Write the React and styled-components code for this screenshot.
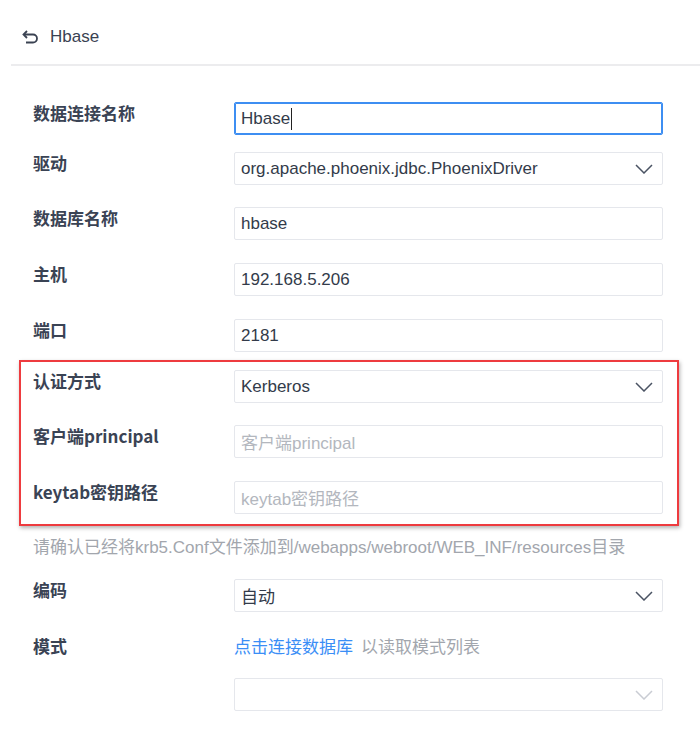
import styled, { createGlobalStyle } from "styled-components";

const Global = createGlobalStyle`
  html, body { margin: 0; padding: 0; background: #fff; }
  body { font-family: "Liberation Sans", "Noto Sans CJK SC", sans-serif; color: #333b4a; }
  * { box-sizing: border-box; }
`;

const Page = styled.div`
  width: 700px;
  height: 734px;
  overflow: hidden;
  background: #fff;
`;

const Header = styled.div`
  margin-left: 11px;
  height: 66px;
  display: flex;
  align-items: center;
  gap: 10px;
  padding-left: 11px;
  padding-top: 10px;
  border-bottom: 2px solid #ececee;
`;

const Title = styled.span`
  font-size: 17px;
  color: #3a4252;
`;

const Form = styled.div`
  padding: 36px 37px 0 33px;
  display: flex;
  flex-direction: column;
`;

const Row = styled.div`
  display: grid;
  grid-template-columns: 201px 1fr;
  align-items: start;
  margin-top: ${(p) => p.$gap ?? 23}px;
`;

const Label = styled.div`
  font-size: 17px;
  font-weight: bold;
  line-height: 22px;
  color: #3a4354;
  font-family: "Noto Sans CJK SC", "Liberation Sans", sans-serif;
`;

const Field = styled.div`
  height: 33px;
  display: flex;
  align-items: center;
  justify-content: space-between;
  padding: 0 9px 0 6px;
  border: 1px solid ${(p) => (p.$focus ? "#3d8ef2" : "#e5e7ec")};
  ${(p) => p.$focus && "box-shadow: 0 0 0 1px #3d8ef2 inset;"}
  border-radius: 2px;
  background: #fff;
  font-size: 17px;
  color: ${(p) => (p.$placeholder ? "#b3b7be" : "#333b4a")};
`;

const Caret = styled.span`
  display: inline-block;
  width: 1px;
  height: 22px;
  background: #222;
  margin-left: 1px;
`;

const AuthBox = styled.div`
  margin: 8px -16px 0 -14px;
  padding: 8px 14px 10px 12px;
  border: 2.5px solid #ee3b3f;
  box-shadow: 1px 2px 4px rgba(0, 0, 0, 0.3);
  & > div:first-child { margin-top: 0; }
`;

const Hint = styled.div`
  margin-top: 11px;
  font-size: 17px;
  color: #a2a6ad;
  line-height: 22px;
  white-space: nowrap;
`;

const Inline = styled.div`
  font-size: 17px;
  line-height: 22px;
  color: #a2a6ad;
  font-family: "Noto Sans CJK SC", "Liberation Sans", sans-serif;
`;

const Link = styled.span`
  color: #3a8ef6;
  margin-right: 8px;
`;

const Chevron = ({ light }) => (
  <svg width="18" height="10" viewBox="0 0 18 10">
    <path d="M1 1 L9 9 L17 1" fill="none" stroke={light ? "#c9ccd3" : "#4a5363"} strokeWidth="1.5" />
  </svg>
);

const BackIcon = () => (
  <svg width="18" height="16" viewBox="0 0 18 16">
    <path d="M5 2 L1.5 5.5 L5 9" fill="none" stroke="#3a4252" strokeWidth="1.8" strokeLinejoin="miter" />
    <path d="M2 5.5 H11 A4 4 0 0 1 11 13.5 H4" fill="none" stroke="#3a4252" strokeWidth="1.8" />
  </svg>
);

const App = () => (
  <Page>
    <Global />
    <Header>
      <BackIcon />
      <Title>Hbase</Title>
    </Header>
    <Form>
      <Row $gap={0}>
        <Label>数据连接名称</Label>
        <Field $focus>
          <span style={{ display: "flex", alignItems: "center" }}>
            Hbase<Caret />
          </span>
        </Field>
      </Row>
      <Row $gap={17}>
        <Label>驱动</Label>
        <Field>
          org.apache.phoenix.jdbc.PhoenixDriver
          <Chevron />
        </Field>
      </Row>
      <Row $gap={22}>
        <Label>数据库名称</Label>
        <Field>hbase</Field>
      </Row>
      <Row>
        <Label>主机</Label>
        <Field>192.168.5.206</Field>
      </Row>
      <Row>
        <Label>端口</Label>
        <Field>2181</Field>
      </Row>
      <AuthBox>
        <Row>
          <Label>认证方式</Label>
          <Field>
            Kerberos
            <Chevron />
          </Field>
        </Row>
        <Row $gap={22}>
          <Label>客户端principal</Label>
          <Field $placeholder>客户端principal</Field>
        </Row>
        <Row>
          <Label>keytab密钥路径</Label>
          <Field $placeholder>keytab密钥路径</Field>
        </Row>
      </AuthBox>
      <Hint>请确认已经将krb5.Conf文件添加到/webapps/webroot/WEB_INF/resources目录</Hint>
      <Row $gap={20}>
        <Label>编码</Label>
        <Field>
          自动
          <Chevron />
        </Field>
      </Row>
      <Row $gap={23}>
        <Label>模式</Label>
        <Inline>
          <Link>点击连接数据库</Link>以读取模式列表
        </Inline>
      </Row>
      <Row $gap={21}>
        <span />
        <Field>
          <span />
          <Chevron light />
        </Field>
      </Row>
    </Form>
  </Page>
);

export default App;
